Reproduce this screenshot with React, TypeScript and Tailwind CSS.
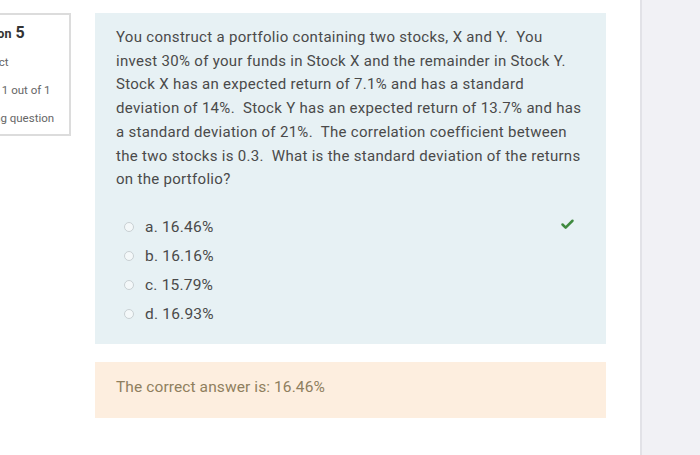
import { Check, Flag } from 'lucide-react'

const options = ['a. 16.46%', 'b. 16.16%', 'c. 15.79%', 'd. 16.93%']

const lines = [
  'You construct a portfolio containing two stocks, X and Y.\u00a0 You',
  'invest 30% of your funds in Stock X and the remainder in Stock Y.',
  'Stock X has an expected return of 7.1% and has a standard',
  'deviation of 14%.\u00a0 Stock Y has an expected return of 13.7% and has',
  'a standard deviation of 21%.\u00a0 The correlation coefficient between',
  'the two stocks is 0.3.\u00a0 What is the standard deviation of the returns',
  'on the portfolio?',
]

export default function App() {
  return (
    <div
      className="flex h-[455px] w-[700px] overflow-hidden bg-white"
      style={{ fontFamily: 'Roboto, "Liberation Sans", sans-serif' }}
    >
      {/* question info box, cut off at the left edge */}
      <div className="ml-[-35px] mt-[13px] h-[123px] w-[106px] shrink-0 border-2 border-[#dcdcdc] bg-white pl-[8px] pt-[6px] text-[11.5px] text-[#666]">
        <div className="ml-[-14px] flex items-baseline font-bold text-[#333]">
          <span className="text-[12.5px]">Question</span>
          <span className="ml-1 text-[16px]">5</span>
        </div>
        <div className="mt-[9px] ml-[-4px]">Correct</div>
        <div className="mt-[11px] ml-[-2px]">Mark 1 out of 1</div>
        <div className="mt-[10px] ml-[-2px] flex items-center gap-[2px]">
          <Flag size={10} className="text-[#888]" />
          <span>Flag question</span>
        </div>
      </div>

      {/* main column */}
      <div className="ml-[24px] mt-[13px] flex w-[511px] shrink-0 flex-col">
        <div className="h-[331px] bg-[#e7f1f4] pl-[21px] pr-[10px] pt-[13px]">
          <p className="whitespace-nowrap text-[15px] leading-[23.7px] tracking-[0.3px] text-[#4a4a4a]">
            {lines.map((l) => (
              <span key={l} className="block">
                {l}
              </span>
            ))}
          </p>
          <div className="mt-[21px] flex flex-col">
            {options.map((o, i) => (
              <div key={o} className="flex h-[29px] items-center">
                <span className="ml-[8px] h-[10px] w-[10px] rounded-full border border-[#c9d0d3] bg-[#f4f8f9]" />
                <span className="ml-[11px] text-[15.5px] tracking-[0.2px] text-[#4a4a4a]">{o}</span>
                {i === 0 && (
                  <Check size={15} strokeWidth={4} className="ml-auto mr-[21px] -mt-[6px] text-[#3f8a3f]" />
                )}
              </div>
            ))}
          </div>
        </div>
        <div className="mt-[18px] flex h-[56px] items-center bg-[#fdeedf] pl-[21px] pb-[4px] text-[15.5px] tracking-[0.1px] text-[#8f7f5e]">
          The correct answer is: 16.46%
        </div>
      </div>

      {/* right side panel */}
      <div className="ml-[34px] h-full flex-1 border-l-2 border-[#e2e2e7] bg-[#f1f1f5]" />
    </div>
  )
}
